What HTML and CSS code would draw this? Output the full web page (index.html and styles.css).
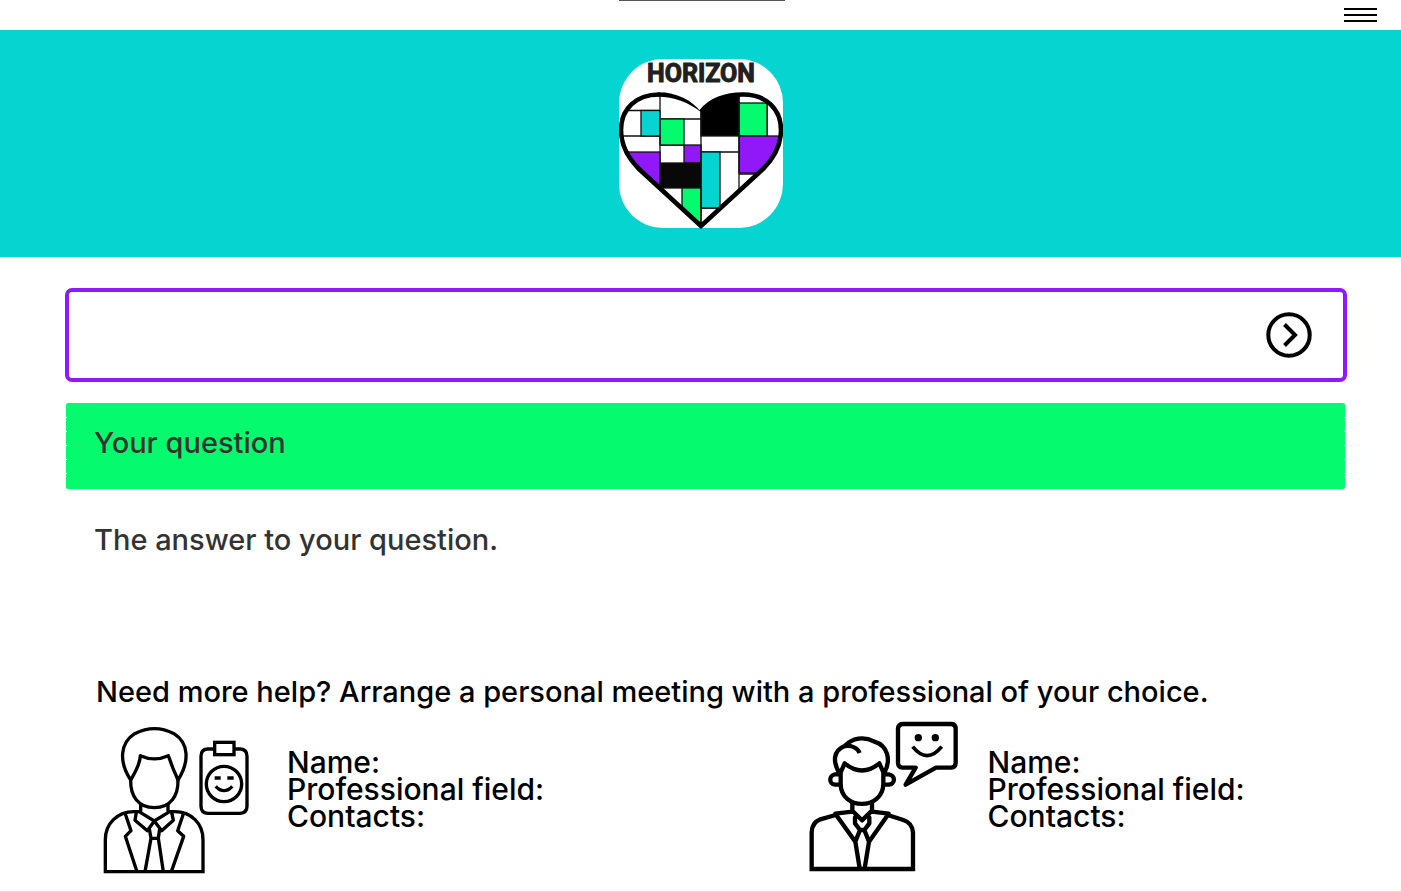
FILE: index.html
```html
<!DOCTYPE html>
<html lang="en">
<head>
<meta charset="utf-8">
<meta name="viewport" content="width=device-width, initial-scale=1">
<title>Horizon</title>
<link rel="stylesheet" href="styles.css">
</head>
<body>
<header>
  <div class="topbar">
    <span class="handle"></span>
    <button class="menu" type="button" aria-label="Menu"><span></span><span></span><span></span></button>
  </div>
  <div class="banner">
    <svg class="logo" viewBox="0 0 164 170" role="img" aria-label="Horizon">
      <defs>
        <clipPath id="heart"><path d="M82 168L20 110C8 98 2 86 2 71C2 50 17 36 40 36C58 36 73 42 82 53C91 42 107 36 124 36C147 36 162 50 162 71C162 86 156 98 144 110Z"/></clipPath>
      </defs>
      <rect width="164" height="169" rx="44" fill="#fff"/>
      <text class="wordmark" x="82" y="23" text-anchor="middle">HORIZON</text>
      <g clip-path="url(#heart)" stroke="#111" stroke-width="1.3">
        <rect x="0" y="30" width="164" height="140" fill="#fff"/>
        <path d="M0 51.500H41M0 77H41M41 60H82M120 45H150M41 86H65M82 93H120M120 115H150M82 149H105M148 45V77" fill="none"/>
        <rect x="22" y="51.500" width="19" height="25.500" fill="#05d4d1"/>
        <rect x="0" y="93" width="41" height="45" fill="#9119f8"/>
        <rect x="41" y="60" width="24" height="26" fill="#05fb6d"/>
        <rect x="65" y="86" width="17" height="18" fill="#9119f8"/>
        <rect x="41" y="104" width="41" height="25" fill="#080808"/>
        <rect x="63" y="129" width="19" height="41" fill="#05fb6d"/>
        <rect x="82" y="30" width="38" height="47" fill="#000"/>
        <rect x="82" y="93" width="19" height="56" fill="#05d4d1"/>
        <rect x="120" y="44" width="28" height="33" fill="#05fb6d"/>
        <rect x="120" y="77" width="44" height="37" fill="#9119f8"/>
        <path d="M41 30V135M82 50V168M120 30V130" fill="none"/>
      </g>
      <path d="M82 53C91 41 107 35.500 124 35.500C147 35.500 162 50 162 71C162 86 156 98 144 110L82 167L20 110C8 98 2 86 2 71C2 50 17 35.500 40 35.500" fill="none" stroke="#000" stroke-width="4.600"/>
      <path d="M39 33.200C57 33 73 41 82 53C69 43 55 38 39 37.800Z" fill="#000"/>
    </svg>
  </div>
</header>
<main>
  <div class="questions">
    <form class="ask">
      <input type="text" aria-label="Ask a question">
      <button class="send" type="button" aria-label="Send">
        <svg viewBox="0 0 46 46" fill="none" stroke="#000" stroke-width="4"><circle cx="23" cy="23" r="20.700"/><path d="M18.500 12.500L29 23L18.500 33.500"/></svg>
      </button>
    </form>
    <h1 class="question">Your question</h1>
    <p class="answer">The answer to your question.</p>
  </div>
  <section class="help">
    <h2>Need more help? Arrange a personal meeting with a professional of your choice.</h2>
    <div class="people">
      <article class="person">
        <svg viewBox="0 0 510 510" fill="none" stroke="#000" stroke-width="10" stroke-linejoin="round" aria-hidden="true">
          <path d="M151 290H132C82 290 46 326 46 374V470H339V374C339 326 304 290 254 290H235" stroke-linejoin="miter"/>
          <path d="M122 195C86 140 90 84 134 56C174 36 213 36 252 56C297 84 299 140 264 195L249 160L235 122Q193 141 151 122C150 150 135 172 122 195Z"/>
          <path d="M122 195C121 242 144 278 193 278C242 278 265 242 264 195"/>
          <path d="M152 266V293L193 318L234 293V266M139 292L135 316L172 347L193 318L215 347L250 316L245 292"/>
          <path d="M178 341L183 370H205L209 341M183 370L165 470M205 370L220 470M106 297L123 347L106 364L141 470M280 297L263 347L281 364L244 470"/>
          <path d="M372 102H352Q333 103 333 124V274Q334 295 354 295H450Q471 294 471 274V124Q471 103 451 102H432"/>
          <rect x="374" y="82" width="58" height="37" stroke-linejoin="miter"/>
          <circle cx="402" cy="207" r="53"/>
          <path d="M374 189H392M412 189H431M377 214Q402 240 427 214"/>
        </svg>
        <p>Name:<br>Professional field:<br>Contacts:</p>
      </article>
      <article class="person">
        <svg viewBox="-27 0 510 510" fill="none" stroke="#000" stroke-width="13" stroke-linejoin="round" aria-hidden="true">
          <path d="M107 300L61 313Q36 323 35 352V462H339V352Q337 324 310 315L263 300" stroke-linejoin="miter"/>
          <path d="M119 176C97 139 100 107 134 93C157 69 191 63 223 80C261 91 276 132 252 176L238 145Q186 188 134 145L122 172V206C122 287 249 287 250 206V172"/>
          <path d="M134 93C153 91 172 97 179 114M119 178H105C86 181 86 207 105 209H120M252 178H266C287 181 287 207 266 209H251"/>
          <path d="M157 263V287L186 316L216 287V263M157 290L106 296L166 380L180 345L165 325V307L171 300M216 290L266 296L207 380L193 345L208 325V307L202 300M180 345H193M166 380L179 460M207 380L194 460"/>
          <path d="M308 27H454Q467 28 467 41V144Q466 157 454 158H408L317 209L347 158H308Q295 157 294 145V41Q295 28 308 27Z"/>
          <g fill="#000" stroke="none"><circle cx="355" cy="68" r="11"/><circle cx="406" cy="68" r="11"/></g>
          <path d="M338 95Q381 149 425 95" stroke-width="11"/>
        </svg>
        <p>Name:<br>Professional field:<br>Contacts:</p>
      </article>
    </div>
  </section>
</main>
</body>
</html>
```
FILE: styles.css
```css
* { box-sizing: border-box; }

body {
  margin: 0;
  background: #fff;
  color: #000;
  font: 500 29px/36px Inter, "Liberation Sans", sans-serif;
}

h1, h2, p {
  margin: 0;
  font-size: 29px;
  font-weight: 500;
}

button {
  padding: 0;
  border: 0;
  background: none;
  cursor: pointer;
}

.topbar {
  position: relative;
  display: flex;
  justify-content: flex-end;
  height: 30px;
  padding: 8px 24px;
}

.handle {
  position: absolute;
  top: 0;
  left: calc(50% - 82px);
  width: 166px;
  height: 1px;
  background: #555;
}

.menu {
  display: flex;
  flex-direction: column;
  gap: 4px;
  width: 33px;
}

.menu span {
  height: 2px;
  background: #000;
}

.banner {
  display: flex;
  justify-content: center;
  padding: 29px 0 28px;
  background: #05d4d1;
}

.logo {
  width: 164px;
  height: 170px;
}

.wordmark {
  font: 700 25px Roboto, sans-serif;
  fill: #231f20;
  stroke: #231f20;
  stroke-width: 1px;
  stroke-linejoin: round;
}

.questions {
  padding: 31px 54px 0 65px;
}

.ask {
  display: flex;
  align-items: center;
  height: 94px;
  padding-right: 31px;
  border: 4px solid #9119f8;
  border-radius: 7px;
}

.ask input {
  flex: 1;
  align-self: stretch;
  min-width: 0;
  padding: 0 26px;
  border: 0;
  outline: 0;
  background: none;
  font: inherit;
}

.send {
  width: 46px;
  height: 46px;
}

.send svg {
  display: block;
}

.question {
  position: relative;
  margin: 21px 2px 0 1px;
  padding: 22px 28px 28px;
  border-radius: 2px;
  background: #05fb6d;
  color: #333;
}

.question::before,
.question::after {
  content: "";
  position: absolute;
  top: 14px;
  bottom: 14px;
  width: 1px;
  background: repeating-linear-gradient(#fff 0 1px, transparent 1px 14px);
}

.question::before { left: 0; }
.question::after { right: 0; }

.answer {
  padding: 33px 29px 0;
  color: #333;
}

.help {
  padding-top: 116px;
  border-bottom: 1px solid #e2e2e2;
}

.help h2 {
  padding: 0 96px;
}

.people {
  display: grid;
  grid-template-columns: 1fr 1fr;
  padding: 5px 0 6px;
}

.person {
  display: flex;
  gap: 27px;
  padding-left: 90px;
}

.person svg {
  flex: none;
  width: 170px;
  height: 170px;
}

.person p {
  padding-top: 34px;
  font-size: 30px;
  line-height: 27px;
}
```
